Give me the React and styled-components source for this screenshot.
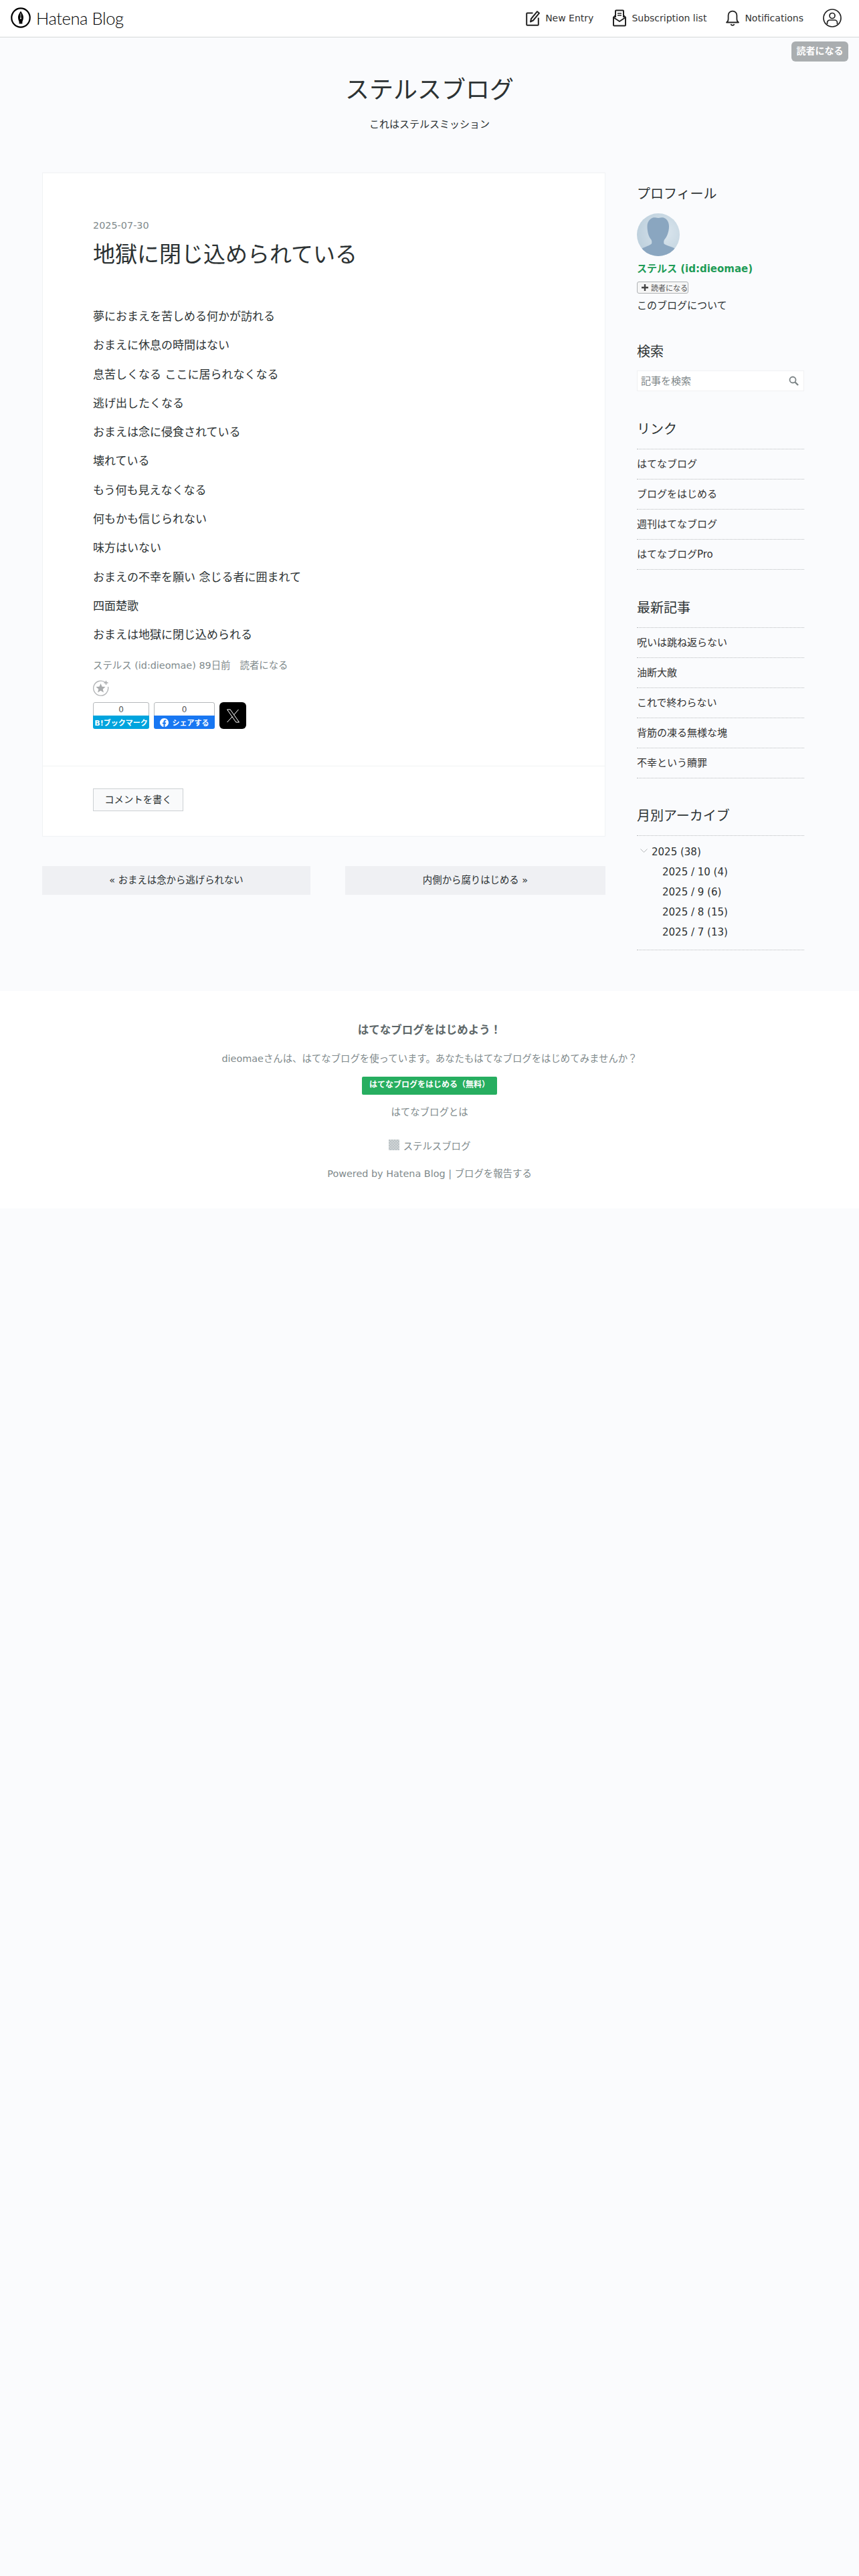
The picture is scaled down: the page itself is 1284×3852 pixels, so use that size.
import React from 'react';
import styled, { createGlobalStyle } from 'styled-components';

const GlobalStyle = createGlobalStyle`
  html, body {
    margin: 0;
    padding: 0;
    background: #fafbfd;
  }
  body {
    font-family: "DejaVu Sans", "Noto Sans CJK JP", sans-serif;
    color: #2c3233;
    font-size: 15px;
  }
  * { box-sizing: border-box; }
`;

const Page = styled.div`
  position: relative;
`;

// Top bar
const TopBar = styled.header`
  display: flex;
  align-items: center;
  justify-content: space-between;
  height: 56px;
  padding: 0 26px 2px 16px;
  background: #fff;
  border-bottom: 1px solid #d6d9d8;
`;

const Brand = styled.div`
  display: flex;
  align-items: center;
  gap: 8px;
`;

const BrandName = styled.span`
  font-family: "Lato", sans-serif;
  font-weight: 300;
  font-size: 25.5px;
  line-height: 30px;
  color: #000;
  letter-spacing: -0.4px;
`;

const TopNav = styled.nav`
  display: flex;
  align-items: center;
`;

const TopNavLink = styled.a`
  display: flex;
  align-items: center;
  gap: 8px;
  margin-right: 29px;
  font-size: 14px;
  color: #333;
`;

const Follow = styled.a`
  position: absolute;
  top: 62px;
  right: 16px;
  width: 85px;
  height: 30px;
  border-radius: 6px;
  background: #aaaeb0;
  color: #fff;
  font-size: 14px;
  font-weight: 700;
  line-height: 29px;
  text-align: center;
`;

// Blog title
const Masthead = styled.div`
  padding-top: 57px;
  text-align: center;
`;

const BlogTitle = styled.h1`
  margin: 0;
  font-size: 36px;
  font-weight: 400;
  line-height: 44px;
  color: #2c3233;
`;

const BlogDesc = styled.p`
  margin: 19px 0 0;
  font-size: 15px;
  line-height: 20px;
`;

// Content
const Columns = styled.div`
  display: flex;
  align-items: flex-start;
  gap: 47px;
  margin: 62px 0 0 63px;
`;

const Main = styled.main`
  width: 842px;
`;

const Card = styled.article`
  background: #fff;
  border: 1px solid #f0f2f4;
`;

const EntryBody = styled.div`
  padding: 68px 75px 55px;
  border-bottom: 1px solid #f0f2f4;
`;

const EntryDate = styled.div`
  font-size: 14.4px;
  line-height: 20px;
  color: #7f8a8c;
`;

const EntryTitle = styled.h2`
  margin: 12px 0 0;
  font-size: 33px;
  font-weight: 400;
  line-height: 44px;
`;

const Poem = styled.div`
  margin-top: 56px;
`;

const Line = styled.p`
  margin: 0 0 15.3px;
  font-size: 17px;
  line-height: 28px;
`;

const Meta = styled.div`
  margin-top: 22px;
  font-size: 14.4px;
  line-height: 20px;
  color: #7f8a8c;
`;

const MetaGap = styled.span`
  margin-left: 14px;
`;

const StarRow = styled.div`
  display: flex;
  height: 24px;
  margin-top: 12px;
`;

const Shares = styled.div`
  display: flex;
  gap: 7px;
  margin-top: 9px;
`;

const ShareBox = styled.a`
  display: flex;
  flex-direction: column;
  width: ${p => p.$width}px;
  height: 40px;
  border-radius: 3px;
  overflow: hidden;
`;

const ShareCount = styled.span`
  height: 20px;
  border: 1px solid #b5b8bb;
  border-bottom: 0;
  border-radius: 3px 3px 0 0;
  background: #fff;
  font-size: 12px;
  line-height: 20px;
  text-align: center;
  color: #555;
`;

const ShareLabel = styled.span`
  display: flex;
  align-items: center;
  justify-content: center;
  gap: ${p => p.$gap || 0}px;
  height: 20px;
  background: ${p => p.$color};
  color: #fff;
  font-size: ${p => p.$size}px;
  font-weight: 700;
  white-space: nowrap;
`;

const XBox = styled.a`
  display: flex;
  align-items: center;
  justify-content: center;
  width: 40px;
  height: 40px;
  border-radius: 6px;
  background: #000;
`;

const CommentArea = styled.div`
  padding: 33px 75px 37px;
`;

const CommentButton = styled.a`
  display: block;
  width: 135px;
  height: 34px;
  border: 1px solid #ccd0d3;
  background: #f9fafb;
  font-size: 14.4px;
  line-height: 32px;
  text-align: center;
`;

const Pager = styled.div`
  display: flex;
  justify-content: space-between;
  margin-top: 44px;
`;

const PagerLink = styled.a`
  width: ${p => p.$width}px;
  height: 43px;
  background: #eff0f3;
  font-size: 14.4px;
  line-height: 42px;
  text-align: center;
`;

// Sidebar
const Sidebar = styled.aside`
  width: 250px;
  padding-top: 18px;
`;

const Module = styled.section`
  margin-top: ${p => p.$top || 0}px;
`;

const ModuleTitle = styled.h3`
  margin: 0;
  font-size: 20px;
  font-weight: 400;
  line-height: 28px;
`;

const Avatar = styled.div`
  width: 64px;
  height: 64px;
  margin-top: 15px;
  border-radius: 50%;
  overflow: hidden;
`;

const ProfileName = styled.a`
  display: block;
  margin-top: 9px;
  font-size: 15px;
  font-weight: 700;
  line-height: 20px;
  color: #1f9c57;
`;

const SubscribeButton = styled.a`
  display: flex;
  align-items: center;
  gap: 3px;
  width: 77px;
  height: 18px;
  margin-top: 9px;
  padding-left: 5px;
  border: 1px solid #aeb1b3;
  border-radius: 3px;
  background: #f6f6f6;
  font-size: 11px;
  color: #555;
`;

const AboutLink = styled.a`
  display: block;
  margin-top: 8px;
  font-size: 15px;
  line-height: 20px;
`;

const SearchBox = styled.form`
  position: relative;
  height: 31px;
  margin: 14px 0 0;
`;

const SearchInput = styled.input`
  display: block;
  width: 100%;
  height: 100%;
  padding: 0 30px 0 5px;
  border: 1px solid #f0f1f3;
  outline: 0;
  background: #fff;
  font: 15px "DejaVu Sans", "Noto Sans CJK JP", sans-serif;
  &::placeholder { color: #7d8587; opacity: 1; }
`;

const SearchIcon = styled.svg`
  position: absolute;
  top: 8px;
  right: 8px;
`;

const List = styled.ul`
  margin: 15px 0 0;
  padding: 0;
  list-style: none;
  border-top: 1px dotted #b9bcbe;
`;

const ListItem = styled.li`
  height: 45px;
  border-bottom: 1px dotted #b9bcbe;
  font-size: 15px;
  line-height: 44px;
  color: #333;
`;

const Archive = styled.div`
  margin-top: 15px;
  padding: 9px 0 11px;
  border-top: 1px dotted #b9bcbe;
  border-bottom: 1px dotted #b9bcbe;
`;

const ArchiveYear = styled.div`
  display: flex;
  align-items: center;
  gap: 6px;
  padding-left: 5px;
  font-size: 15px;
  line-height: 30px;
`;

const ArchiveMonth = styled.div`
  padding-left: 38px;
  font-size: 15px;
  line-height: 30px;
`;

// Footer
const Footer = styled.footer`
  margin-top: 61px;
  padding: 47px 0 42px;
  background: #fff;
  text-align: center;
  font-size: 14.4px;
  line-height: 20px;
  color: #7f8a8c;
`;

const FooterHead = styled.div`
  font-size: 16.5px;
  font-weight: 700;
  line-height: 24px;
  color: #5d6769;
`;

const FooterText = styled.p`
  margin: ${p => p.$top}px 0 0;
`;

const StartButton = styled.a`
  display: block;
  width: 202px;
  height: 27px;
  margin: 17px auto 0;
  padding-left: 11px;
  border-radius: 2px;
  background: #27ae60;
  color: #fff;
  font-size: 12px;
  font-weight: 700;
  line-height: 25px;
  text-align: left;
  white-space: nowrap;
`;

const BlogLine = styled.div`
  display: flex;
  align-items: flex-start;
  justify-content: center;
  gap: 6px;
  margin-top: 31px;
`;

const BlogIcon = styled.span`
  width: 16px;
  height: 16px;
  background-color: #bcc3c6;
  background-image:
    linear-gradient(45deg, #cfd4d6 25%, transparent 25%, transparent 75%, #cfd4d6 75%),
    linear-gradient(45deg, #cfd4d6 25%, transparent 25%, transparent 75%, #cfd4d6 75%);
  background-size: 4px 4px;
  background-position: 0 0, 2px 2px;
`;

const Logo = () => (
  <svg width="30" height="31" viewBox="0 0 30 31">
    <ellipse cx="15" cy="15.5" rx="13.7" ry="14.2" fill="none" stroke="#000" strokeWidth="2.2" />
    <path d="M15 5.5c1 2 4 5.5 4 9.5 0 3-1 5-1.6 6.5v3h-4.8v-3C12 20 11 18 11 15c0-4 3-7.5 4-9.5z" fill="#000" />
    <path d="M15 9v7" stroke="#fff" strokeWidth="0.8" />
    <circle cx="15" cy="16.5" r="1" fill="#fff" />
  </svg>
);

const EditIcon = () => (
  <svg width="21" height="24" viewBox="0 0 21 24" fill="none" stroke="#222" strokeWidth="2">
    <path d="M10.5 4.5H2.2a1 1 0 0 0-1 1v16.2a1 1 0 0 0 1 1h15.6a1 1 0 0 0 1-1V11.5" strokeLinejoin="round" />
    <path d="M7 17.5l1-4.5L17 2.2l3 2.5L11 15.5z" strokeLinejoin="round" />
  </svg>
);

const InboxIcon = () => (
  <svg width="20" height="26" viewBox="0 0 20 26" fill="none" stroke="#222" strokeWidth="2">
    <path d="M4 12V2.5a1 1 0 0 1 1-1h10a1 1 0 0 1 1 1V12" />
    <path d="M7 6h6M7 9h6" strokeWidth="1.6" />
    <path d="M4 9L1 12v11.5a1 1 0 0 0 1 1h16a1 1 0 0 0 1-1V12l-3-3" strokeLinejoin="round" />
    <path d="M1 12l9 6 9-6" strokeLinejoin="round" />
  </svg>
);

const BellIcon = () => (
  <svg width="20" height="24" viewBox="0 0 20 24" fill="none" stroke="#222" strokeWidth="1.8">
    <path d="M1 18.5c2-1.2 2.6-2.6 2.6-5V8a6.4 6.4 0 0 1 12.8 0v5.500c0 2.400.6 3.800 2.600 5z" strokeLinejoin="round" />
    <path d="M7.500 21a2.600 2.600 0 0 0 5 0" />
  </svg>
);

const UserIcon = () => (
  <svg width="28" height="28" viewBox="0 0 28 28" fill="none" stroke="#222" strokeWidth="1.7">
    <ellipse cx="14" cy="14" rx="13" ry="13" />
    <circle cx="14" cy="10.500" r="4" />
    <path d="M6.500 23v-2a4 4 0 0 1 4-4h7a4 4 0 0 1 4 4v2" />
  </svg>
);

const StarIcon = () => (
  <svg width="24" height="24" viewBox="0 0 24 24" fill="none">
    <path d="M18.500 3.500A11 11 0 1 0 22.500 10" stroke="#b4b6b8" strokeWidth="1.400" />
    <path d="M11.500 5l2 4.700 5 .4-3.800 3.300 1.200 5-4.400-2.700-4.400 2.700 1.200-5L4.500 10.100l5-.4z" fill="#a9abad" />
    <path d="M19.500 1v6M16.500 4h6" stroke="#a9abad" strokeWidth="1.400" />
  </svg>
);

const FacebookIcon = () => (
  <svg width="13" height="13" viewBox="0 0 24 24" fill="#fff">
    <path d="M24 12.070C24 5.400 18.630 0 12 0S0 5.400 0 12.070c0 6.030 4.390 11.020 10.130 11.930v-8.440H7.080v-3.490h3.050V9.410c0-3.020 1.790-4.690 4.530-4.690 1.310 0 2.680.23 2.680.23v2.970h-1.510c-1.490 0-1.960.93-1.960 1.880v2.270h3.330l-.53 3.490h-2.800V24C19.610 23.090 24 18.100 24 12.070z" />
  </svg>
);

const XIcon = () => (
  <svg width="21" height="21" viewBox="0 0 21 21" fill="none" stroke="#fff" strokeWidth="1">
    <path d="M1.500 1h4.700l13.300 19h-4.700z" />
    <path d="M18.500 1l-7.200 8.300M9.300 11.700L1.500 20" />
  </svg>
);

const AvatarImage = () => (
  <svg width="64" height="64" viewBox="0 0 64 64">
    <defs>
      <radialGradient id="avatarBg" cx="0.65" cy="0.45" r="0.7">
        <stop offset="0" stopColor="#dbe6ee" />
        <stop offset="1" stopColor="#bccfdc" />
      </radialGradient>
    </defs>
    <rect width="64" height="64" fill="url(#avatarBg)" />
    <path d="M32 7c3 0 5-1 8-.5 4 1.500 8 5.500 8 13 0 8-3 16-7 20-1 2-1 4-.5 6 3 3 14 4 20 10v9H3v-9c5-5 15-6 19-10 .5-2 .5-4-.5-6-4-4-6-12-6-20 0-7 4-11.500 8.500-13 3-.5 5 .5 8 .5z" fill="#8aa6c0" />
  </svg>
);

const PlusIcon = () => (
  <svg width="12" height="12" viewBox="0 0 12 12">
    <path d="M6 1v10M1 6h10" stroke="#444" strokeWidth="2.400" />
  </svg>
);

const MagnifierIcon = () => (
  <SearchIcon width="15" height="15" viewBox="0 0 15 15" fill="none" stroke="#7d8587">
    <circle cx="6" cy="6" r="4.500" strokeWidth="1.800" />
    <path d="M9.500 9.500l4.500 4.500" strokeWidth="2.400" />
  </SearchIcon>
);

const ChevronSvg = styled.svg`
  margin-bottom: 4px;
`;

const Chevron = () => (
  <ChevronSvg width="11" height="7" viewBox="0 0 11 7" fill="none" stroke="#b3b6b8">
    <path d="M.5.5l5 5 5-5" />
  </ChevronSvg>
);

const poem = [
  '夢におまえを苦しめる何かが訪れる',
  'おまえに休息の時間はない',
  '息苦しくなる ここに居られなくなる',
  '逃げ出したくなる',
  'おまえは念に侵食されている',
  '壊れている',
  'もう何も見えなくなる',
  '何もかも信じられない',
  '味方はいない',
  'おまえの不幸を願い 念じる者に囲まれて',
  '四面楚歌',
  'おまえは地獄に閉じ込められる',
];

const links = ['はてなブログ', 'ブログをはじめる', '週刊はてなブログ', 'はてなブログPro'];
const recent = ['呪いは跳ね返らない', '油断大敵', 'これで終わらない', '背筋の凍る無様な塊', '不幸という贖罪'];
const months = ['2025 / 10 (4)', '2025 / 9 (6)', '2025 / 8 (15)', '2025 / 7 (13)'];

export default function App() {
  return (
    <Page>
      <GlobalStyle />
      <TopBar>
        <Brand>
          <Logo />
          <BrandName>Hatena Blog</BrandName>
        </Brand>
        <TopNav>
          <TopNavLink><EditIcon />New Entry</TopNavLink>
          <TopNavLink><InboxIcon />Subscription list</TopNavLink>
          <TopNavLink><BellIcon />Notifications</TopNavLink>
          <UserIcon />
        </TopNav>
      </TopBar>
      <Follow>読者になる</Follow>

      <Masthead>
        <BlogTitle>ステルスブログ</BlogTitle>
        <BlogDesc>これはステルスミッション</BlogDesc>
      </Masthead>

      <Columns>
        <Main>
          <Card>
            <EntryBody>
              <EntryDate>2025-07-30</EntryDate>
              <EntryTitle>地獄に閉じ込められている</EntryTitle>
              <Poem>
                {poem.map(line => <Line key={line}>{line}</Line>)}
              </Poem>
              <Meta>ステルス (id:dieomae) 89日前<MetaGap>読者になる</MetaGap></Meta>
              <StarRow><StarIcon /></StarRow>
              <Shares>
                <ShareBox $width={84}>
                  <ShareCount>0</ShareCount>
                  <ShareLabel $color="#00a4de" $size={11}>B!ブックマーク</ShareLabel>
                </ShareBox>
                <ShareBox $width={91}>
                  <ShareCount>0</ShareCount>
                  <ShareLabel $color="#1877f2" $size={11} $gap={6}><FacebookIcon />シェアする</ShareLabel>
                </ShareBox>
                <XBox><XIcon /></XBox>
              </Shares>
            </EntryBody>
            <CommentArea>
              <CommentButton>コメントを書く</CommentButton>
            </CommentArea>
          </Card>
          <Pager>
            <PagerLink $width={401}>« おまえは念から逃げられない</PagerLink>
            <PagerLink $width={389}>内側から腐りはじめる »</PagerLink>
          </Pager>
        </Main>

        <Sidebar>
          <Module>
            <ModuleTitle>プロフィール</ModuleTitle>
            <Avatar><AvatarImage /></Avatar>
            <ProfileName>ステルス (id:dieomae)</ProfileName>
            <SubscribeButton><PlusIcon />読者になる</SubscribeButton>
            <AboutLink>このブログについて</AboutLink>
          </Module>
          <Module $top={45}>
            <ModuleTitle>検索</ModuleTitle>
            <SearchBox>
              <SearchInput placeholder="記事を検索" />
              <MagnifierIcon />
            </SearchBox>
          </Module>
          <Module $top={43}>
            <ModuleTitle>リンク</ModuleTitle>
            <List>
              {links.map(l => <ListItem key={l}>{l}</ListItem>)}
            </List>
          </Module>
          <Module $top={43}>
            <ModuleTitle>最新記事</ModuleTitle>
            <List>
              {recent.map(l => <ListItem key={l}>{l}</ListItem>)}
            </List>
          </Module>
          <Module $top={42}>
            <ModuleTitle>月別アーカイブ</ModuleTitle>
            <Archive>
              <ArchiveYear><Chevron />2025 (38)</ArchiveYear>
              {months.map(m => <ArchiveMonth key={m}>{m}</ArchiveMonth>)}
            </Archive>
          </Module>
        </Sidebar>
      </Columns>

      <Footer>
        <FooterHead>はてなブログをはじめよう！</FooterHead>
        <FooterText $top={20}>dieomaeさんは、はてなブログを使っています。あなたもはてなブログをはじめてみませんか？</FooterText>
        <StartButton>はてなブログをはじめる（無料）</StartButton>
        <FooterText $top={16}>はてなブログとは</FooterText>
        <BlogLine><BlogIcon />ステルスブログ</BlogLine>
        <FooterText $top={21}>Powered by Hatena Blog | ブログを報告する</FooterText>
      </Footer>
    </Page>
  );
}
